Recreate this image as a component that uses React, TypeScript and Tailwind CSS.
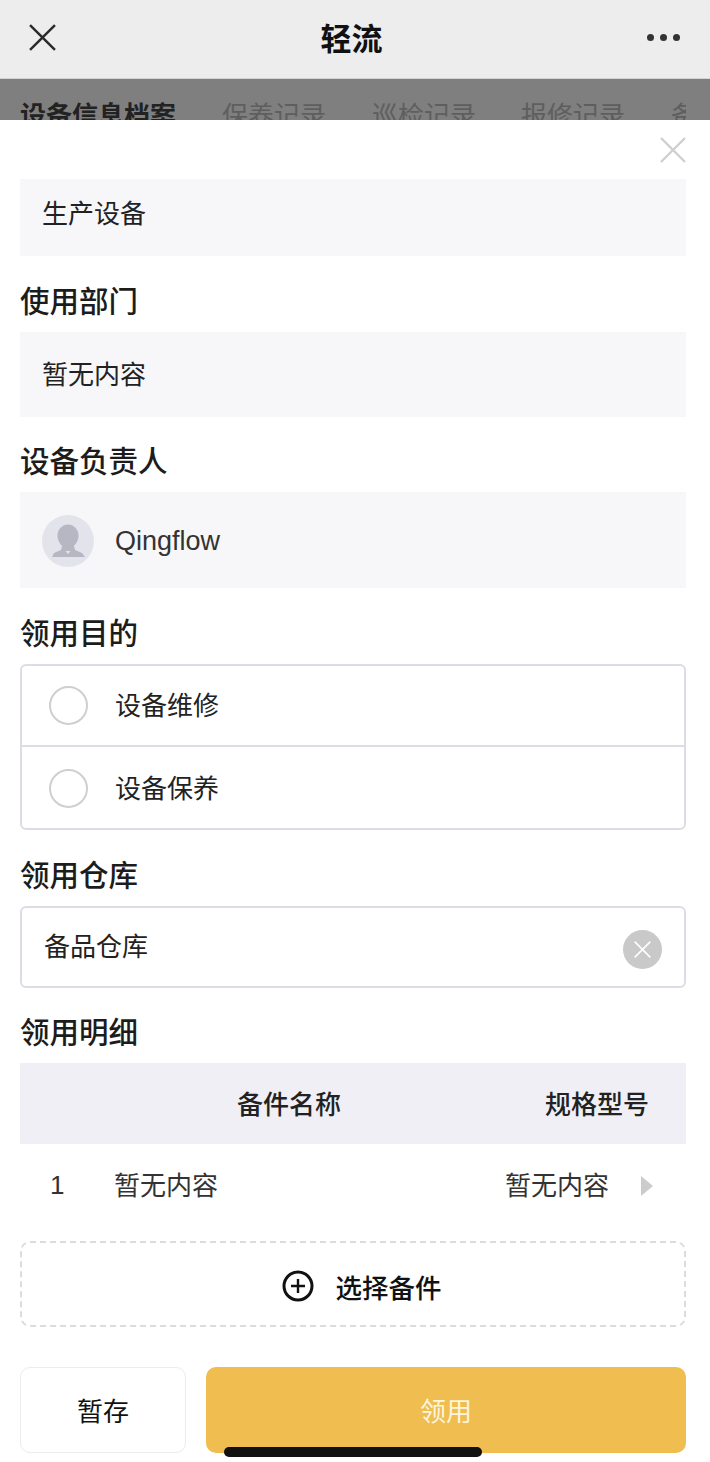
import React from 'react';

const font = { fontFamily: '"Noto Sans CJK SC", "Liberation Sans", sans-serif' };

const Label = ({ children, short }: { children: React.ReactNode; short?: boolean }) => (
  <div className={`${short ? 'h-[75px] pt-[13px]' : 'h-[76px] pt-[14px]'} flex items-center pb-[2px] text-[29.5px] font-medium text-[#1c1c1c] leading-none`}>
    {children}
  </div>
);

const CloseIcon = ({ className }: { className: string }) => (
  <svg viewBox="0 0 26 26" className={className} fill="none" stroke="currentColor" strokeWidth="2.4">
    <path d="M1 1 L25 25 M25 1 L1 25" />
  </svg>
);

const Radio = ({ text, border }: { text: string; border?: boolean }) => (
  <div className={`flex items-center pl-[27px] ${border ? 'h-[81px] border-b-2 border-[#dcdce6]' : 'h-[83px]'}`}>
    <div className="w-[39px] h-[39px] rounded-full border-2 border-[#cfcfcf]" />
    <span className="ml-[27px] pb-[4px] text-[26px] text-[#222] leading-none">{text}</span>
  </div>
);

export default function App() {
  return (
    <div className="relative w-[710px] h-[1462px] overflow-hidden bg-white" style={font}>
      {/* WeChat title bar */}
      <div className="h-[79px] bg-[#ededed] border-b border-[#d4d4d4] flex items-center justify-between pl-[29px] pr-[30px] pb-[4px]">
        <CloseIcon className="w-[27px] h-[27px] text-[#2b2b2b]" />
        <span className="text-[31px] font-bold text-[#111] leading-none pb-[2px]">轻流</span>
        <div className="flex gap-[6px]">
          <span className="w-[7px] h-[7px] rounded-full bg-[#333]" />
          <span className="w-[7px] h-[7px] rounded-full bg-[#333]" />
          <span className="w-[7px] h-[7px] rounded-full bg-[#333]" />
        </div>
      </div>

      {/* dimmed tabs behind the sheet */}
      <div className="h-[41px] bg-[#7f7f7f] overflow-hidden flex items-start pt-[22px] pl-[20px] text-[26px] leading-[26px] whitespace-nowrap text-[#5e5e5e]">
        <span className="font-bold text-[#222] mr-[46px]">设备信息档案</span>
        <span className="mr-[46px]">保养记录</span>
        <span className="mr-[45px]">巡检记录</span>
        <span className="mr-[46px]">报修记录</span>
        <span className="w-[15px] overflow-hidden">备</span>
      </div>

      {/* sheet */}
      <div className="pl-[20px] pr-[24px]">
        <div className="h-[59px] flex justify-end items-start pt-[17px]">
          <CloseIcon className="w-[26px] h-[26px] text-[#cfcfcf]" />
        </div>

        <div className="h-[77px] bg-[#f7f7fa] flex items-center pl-[22px] text-[26px] text-[#222] leading-none pb-[11px]">生产设备</div>

        <Label>使用部门</Label>
        <div className="h-[85px] bg-[#f7f7fa] flex items-center pl-[22px] text-[26px] text-[#222] leading-none pb-[4px]">暂无内容</div>

        <Label short>设备负责人</Label>
        <div className="h-[96px] bg-[#f7f7fa] flex items-center pl-[22px] pt-[2px]">
          <div className="w-[52px] h-[52px] rounded-full bg-[#e3e3eb] overflow-hidden">
            <svg viewBox="0 0 52 52" className="w-full h-full" fill="#b7b7c4">
              <ellipse cx="26" cy="21" rx="10.5" ry="11.5" />
              <path d="M20 31 h12 l1 4 l7 3 l3 4 H10 l2 -4 l7 -3 z" />
              <path d="M23.5 36 h5 l-2.5 3 z" fill="#e3e3eb" />
            </svg>
          </div>
          <span className="ml-[21px] text-[27px] text-[#333] leading-none" style={{ fontFamily: '"Liberation Sans", sans-serif' }}>Qingflow</span>
        </div>

        <Label>领用目的</Label>
        <div className="h-[166px] border-2 border-[#dcdce6] rounded-[6px]">
          <Radio text="设备维修" border />
          <Radio text="设备保养" />
        </div>

        <Label>领用仓库</Label>
        <div className="h-[82px] border-2 border-[#dcdce6] rounded-[6px] flex items-center justify-between pl-[22px] pr-[22px]">
          <span className="text-[26px] text-[#222] leading-none pb-[4px]">备品仓库</span>
          <div className="w-[39px] h-[39px] mt-[4px] rounded-full bg-[#c9c9c9] flex items-center justify-center">
            <CloseIcon className="w-[17px] h-[17px] text-white" />
          </div>
        </div>

        <Label short>领用明细</Label>
        <div className="h-[81px] bg-[#efeff5] flex items-center text-[26px] font-medium text-[#222] leading-none pb-[2px]">
          <span className="ml-[217px]">备件名称</span>
          <span className="ml-[204px]">规格型号</span>
        </div>
        <div className="h-[82px] flex items-center text-[26px] text-[#333] leading-none pb-[2px]">
          <span className="ml-[30px] w-[64px] pt-[2px]" style={{ fontFamily: '"Liberation Sans", sans-serif' }}>1</span>
          <span>暂无内容</span>
          <span className="ml-[287px]">暂无内容</span>
          <svg viewBox="0 0 12 20" className="ml-[32px] mt-[3px] w-[12px] h-[20px]" fill="#cccccc">
            <path d="M0 0 L12 10 L0 20 Z" />
          </svg>
        </div>

        <div className="mt-[15px] h-[86px] border-2 border-dashed border-[#dcdcdc] rounded-[10px] flex items-center justify-center pl-[17px] pt-[4px]">
          <svg viewBox="0 0 32 32" className="w-[32px] h-[32px]" fill="none" stroke="#111" strokeWidth="3">
            <circle cx="16" cy="16" r="14" />
            <path d="M16 9 V23 M9 16 H23" strokeWidth="2.4" />
          </svg>
          <span className="ml-[22px] text-[26.5px] font-medium text-[#111] leading-none pt-[2px]">选择备件</span>
        </div>

        <div className="mt-[40px] flex gap-[20px]">
          <button className="w-[166px] h-[86px] bg-white border border-[#ececec] rounded-[10px] text-[26px] text-[#111] leading-none">暂存</button>
          <button className="flex-1 h-[86px] bg-[#efbd50] rounded-[10px] text-[26px] text-[#fdf5dd] leading-none">领用</button>
        </div>
      </div>

      {/* iOS home indicator */}
      <div className="absolute left-[224px] top-[1447px] w-[258px] h-[10px] rounded-full bg-[#111]" />
    </div>
  );
}
